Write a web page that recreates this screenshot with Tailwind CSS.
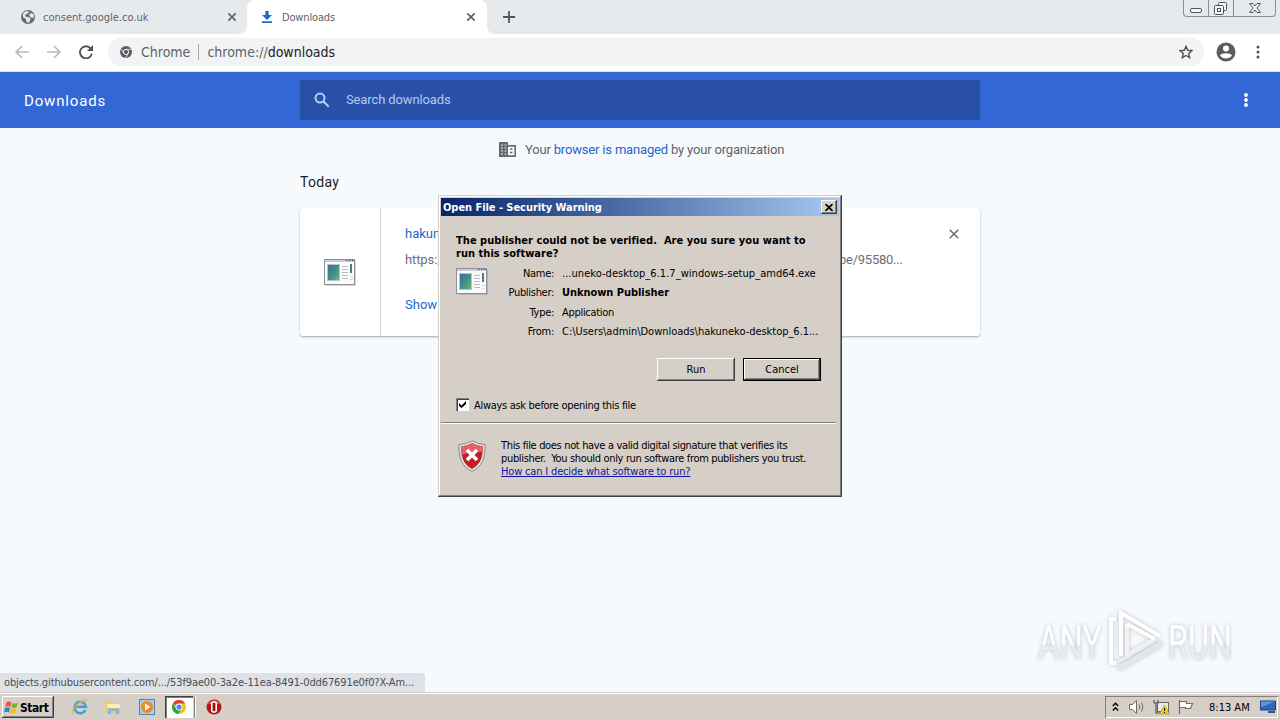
<!DOCTYPE html>
<html lang="en">
<head>
    <meta charset="UTF-8">
    <meta name="viewport" content="width=device-width, initial-scale=1.0">
    <title>Downloads</title>
    <script src="https://cdn.jsdelivr.net/npm/@tailwindcss/browser@4"></script>
</head>
<body class="bg-[#f7fafd] overflow-hidden">
    <!-- Shared icon -->
    <svg class="absolute w-0 h-0">
        <linearGradient id="app-photo" x1="0" y1="0" x2="1" y2="1">
            <stop offset="0" stop-color="#4569a8"/>
            <stop offset=".5" stop-color="#3f8d86"/>
            <stop offset="1" stop-color="#6db87a"/>
        </linearGradient>
        <symbol id="app-icon" viewBox="0 0 32 27">
            <rect x="1.5" y="1.5" width="30" height="25" fill="#77777f" opacity=".6"/>
            <rect x="0.5" y="0.5" width="30" height="25" fill="#fbfbfc" stroke="#8e9098"/>
            <path d="M1 1h29v2H1z" fill="#c9ccd6"/>
            <path d="M22 1.500h1.500M25 1.500h1.500M28 1.500h1.500" stroke="#4a4f60"/>
            <rect x="3.500" y="5.500" width="12" height="16" fill="url(#app-photo)" stroke="#b9c3cc"/>
            <path d="M18 7.500h6M18 10.500h6M18 13.500h6M18 16.500h6M18 19.500h6" stroke="#b9bbc4"/>
            <rect x="26" y="5" width="2" height="9" fill="#3f7f86"/>
            <path d="M26 17.500h3M26 20.500h3" stroke="#d5d7dc"/>
        </symbol>
    </svg>

    <div class="relative w-[1280px] h-[720px] overflow-hidden flex flex-col font-['Roboto',sans-serif]">
        <!-- Tab strip -->
        <div class="h-[34px] shrink-0 bg-[#e7eaed] flex relative font-['DejaVu_Sans_Condensed','DejaVu_Sans',sans-serif] text-[11px] text-[#5f6368]">
            <div class="w-[247px] h-[34px] pl-5 pr-[10px] flex items-center">
                <svg class="w-4 h-4" viewBox="0 0 16 16"><circle cx="8" cy="8" r="7" fill="#6a6d71"/><path d="M3 4.500l3-2.500 3 .5-1 2-2 .5-1 2 2 1 3 .5.5 2-2 3.500-2-1-.5-3-3-2zM11 4l2.500 1 .5 3-2 1-2-1.500-1-1.500z" fill="#e7eaed"/></svg>
                <span class="ml-[7px] pt-[2px]">consent.google.co.uk</span>
                <svg class="ml-auto w-[10px] h-[10px]" viewBox="0 0 10 10"><path d="M1.300 1.300l7.400 7.400M8.700 1.300L1.300 8.700" stroke="#5f6368" stroke-width="1.700"/></svg>
            </div>
            <div class="w-60 h-[34px] pl-[14px] pr-[11px] flex items-center bg-white rounded-t-lg">
                <svg class="w-3 h-3" viewBox="0 0 12 12"><path d="M4.300 0h3.400v4H11L6 9 1 4h3.300zM1 10.300h10V12H1z" fill="#1a6bd8"/></svg>
                <span class="ml-[9px] pt-[2px] tracking-[-0.150px]">Downloads</span>
                <svg class="ml-auto w-[10px] h-[10px]" viewBox="0 0 10 10"><path d="M1.300 1.300l7.400 7.400M8.700 1.300L1.300 8.700" stroke="#5f6368" stroke-width="1.700"/></svg>
            </div>
            <svg class="ml-4 mt-[11px] w-3 h-3" viewBox="0 0 12 12"><path d="M6 0v12M0 6h12" stroke="#505458" stroke-width="1.800"/></svg>
            <div class="absolute left-[239px] bottom-0 w-2 h-2 bg-white"><div class="w-2 h-2 bg-[#e7eaed] rounded-br-lg"></div></div>
            <div class="absolute left-[487px] bottom-0 w-2 h-2 bg-white"><div class="w-2 h-2 bg-[#e7eaed] rounded-bl-lg"></div></div>
            <!-- Window buttons -->
            <div class="absolute right-1 top-0 h-[17px] w-[93px] flex border border-t-0 border-[#8b8e92] rounded-b-[4px]">
                <div class="w-[25px] border-r border-[#8b8e92] flex justify-center">
                    <svg class="w-3 h-4" viewBox="0 0 12 16"><rect x=".5" y="8.500" width="11" height="4" rx="1.500" fill="#f4f5f6" stroke="#50555c"/></svg>
                </div>
                <div class="w-[25px] border-r border-[#8b8e92] flex justify-center">
                    <svg class="w-[14px] h-4" viewBox="0 0 14 16" fill="#f4f5f6" stroke="#50555c"><rect x="4.500" y="2.500" width="8" height="8" rx="1"/><rect x=".5" y="5.500" width="9" height="9" rx="1"/><rect x="3.500" y="8.500" width="3" height="3"/></svg>
                </div>
                <div class="flex-1 flex justify-center">
                    <svg class="w-3 h-4" viewBox="0 0 12 16"><path d="M.5 3.500h3.500l2 2.500 2-2.500h3.500L8 8l3.500 4.500H8L6 10l-2 2.500H.5L4 8z" fill="#f4f5f6" stroke="#50555c"/></svg>
                </div>
            </div>
        </div>

        <!-- Toolbar -->
        <div class="h-[38px] shrink-0 bg-white border-b border-[#dfe3e8] flex items-center pl-[15px] pr-[14px] pb-[1px]">
            <svg class="w-[14px] h-[14px]" viewBox="0 0 14 14" fill="none" stroke="#b8babd" stroke-width="1.700"><path d="M14 7H1.500M7 1L1.200 7 7 13"/></svg>
            <svg class="ml-[18px] w-[14px] h-[14px]" viewBox="0 0 14 14" fill="none" stroke="#b8babd" stroke-width="1.700"><path d="M0 7h12.500M7 1l5.800 6L7 13"/></svg>
            <svg class="ml-[18px] w-[14px] h-[14px]" viewBox="0 0 14 14"><path d="M11.700 3.600A6 6 0 1 0 12.800 8.800" fill="none" stroke="#505458" stroke-width="1.900"/><path d="M14 0v6H8z" fill="#505458"/></svg>
            <div class="ml-[15px] w-[1096px] h-7 rounded-full bg-[#f1f3f4] flex items-center pl-3 pr-[11px] font-['DejaVu_Sans_Condensed','DejaVu_Sans',sans-serif] text-[14px] text-[#5f6368]">
                <svg class="w-3 h-3" viewBox="0 0 12 12"><circle cx="6" cy="6" r="6" fill="#5a5e62"/><circle cx="6" cy="6" r="2.600" fill="none" stroke="#f1f3f4" stroke-width="1"/><path d="M6 3.400h5.200M3.700 7.300L1.200 3M8.200 7.300L5.700 11.700" stroke="#f1f3f4" stroke-width=".8"/></svg>
                <span class="ml-[9px]">Chrome</span>
                <span class="ml-[8px] w-px h-4 bg-[#a6a9ad]"></span>
                <span class="ml-[8px]">chrome://<span class="text-[#202124]">downloads</span></span>
                <svg class="ml-auto w-[14px] h-[14px]" viewBox="0 0 14 14"><path d="M7 1.300l1.700 4 4.300.4-3.300 2.800 1 4.200L7 10.500l-3.700 2.200 1-4.200L1 5.700l4.300-.4z" fill="none" stroke="#505458" stroke-width="1.400"/></svg>
            </div>
            <svg class="ml-3 w-5 h-5" viewBox="0 0 20 20"><circle cx="10" cy="10" r="9.500" fill="#5a5d61"/><circle cx="10" cy="6.500" r="3" fill="#fff"/><path d="M4 13.500c1.500-3 10.500-3 12 0-2.500 4-9.500 4-12 0z" fill="#fff"/></svg>
            <svg class="ml-5 w-1 h-[14px]" viewBox="0 0 4 14" fill="#505458"><circle cx="2" cy="2" r="1.500"/><circle cx="2" cy="7" r="1.500"/><circle cx="2" cy="12" r="1.500"/></svg>
        </div>

        <!-- Downloads header -->
        <div class="h-14 shrink-0 bg-[#3367d6] text-white flex items-center pl-6 pr-[31px]">
            <h1 class="w-[276px] pt-[2px] text-[15px] tracking-[0.850px]">Downloads</h1>
            <div class="w-[680px] h-10 bg-[#2850a7] flex items-center pl-[14px]">
                <svg class="w-4 h-4" viewBox="0 0 16 16" fill="none" stroke="#b9cbf2" stroke-width="2"><circle cx="6" cy="6" r="4.500"/><path d="M9.300 9.300l5.500 5.500"/></svg>
                <span class="ml-4 text-[13px] text-[#b9cbf2] tracking-[-0.120px]">Search downloads</span>
            </div>
            <svg class="ml-auto w-[6px] h-4" viewBox="0 0 6 16" fill="#fff"><circle cx="3" cy="3" r="1.900"/><circle cx="3" cy="8" r="1.900"/><circle cx="3" cy="13" r="1.900"/></svg>
        </div>

        <!-- Downloads list -->
        <div class="flex-1 w-[680px] ml-[300px] text-[13px]">
            <div class="h-[43px] flex items-center pl-[199px] text-[#5f6368]">
                <svg class="w-[17px] h-[15px]" viewBox="0 0 17 15"><path d="M0 0h9v3h8v12H0z" fill="#65686c"/><path d="M2 3h2M5.500 3h2M2 6h2M5.500 6h2M2 9h2M5.500 9h2M2 12h2M5.500 12h2" stroke="#f7fafd" stroke-width=".9"/><path d="M9 4.700h6.400v8.600H9z" fill="#f7fafd"/><path d="M11 7h2.500M11 10.500h2.500" stroke="#65686c" stroke-width="1.500"/></svg>
                <span class="ml-[9px] whitespace-nowrap tracking-[-0.175px]">Your <span class="text-[#2566c8]">browser is managed</span> by your organization</span>
            </div>
            <div class="h-[37px] pt-[1px] text-[14px] leading-[20px] text-[#202124] tracking-[0.300px]">Today</div>
            <div class="h-32 bg-white rounded-[3px] shadow-[0_1px_2px_rgba(60,64,67,0.45)] flex">
                <div class="w-[81px] border-r border-[#d6d8db] flex items-center justify-center">
                    <svg class="w-8 h-[27px]"><use href="#app-icon"/></svg>
                </div>
                <div class="flex-1 pl-6 pt-[17px] pr-[21px]">
                    <div class="flex items-center justify-between h-[18px]">
                        <span class="w-10 overflow-hidden text-[#2566c8]">hakun</span>
                        <svg class="w-[10px] h-[10px]" viewBox="0 0 10 10"><path d="M.7.7l8.600 8.600M9.300.7L.7 9.300" stroke="#5f6368" stroke-width="1.300"/></svg>
                    </div>
                    <div class="mt-2 h-[18px] leading-[18px] flex text-[#6b6e73]">
                        <span class="w-[434px] tracking-[-0.100px]">https:/</span>
                        <span class="tracking-[-0.250px]">be/95580...</span>
                    </div>
                    <div class="mt-[27px] h-[18px] leading-[18px] text-[#2566c8]">Show</div>
                </div>
            </div>
        </div>

        <!-- Link status -->
        <div class="w-[425px] h-[19px] shrink-0 bg-[#dee1e6] rounded-tr-[4px] pl-1 pt-[1px] flex items-center font-['DejaVu_Sans_Condensed','DejaVu_Sans',sans-serif] text-[11px] text-[#4a4d52] tracking-[-0.120px] whitespace-nowrap">objects.githubusercontent.com/.../53f9ae00-3a2e-11ea-8491-0dd67691e0f0?X-Am...</div>

        <!-- Taskbar -->
        <div class="h-7 shrink-0 bg-[#d5cfc7] border-t border-[#d5cfc7] shadow-[inset_0_1px_#fff] flex items-center pt-[1px] pl-[2px] pr-[2px] font-['DejaVu_Sans_Condensed','DejaVu_Sans',sans-serif] text-[11px] text-black">
            <div class="w-[52px] h-[22px] flex items-center pl-[2px] shadow-[inset_-1px_-1px_#404040,inset_1px_1px_#fff,inset_-2px_-2px_#808080]">
                <svg class="w-[15px] h-[15px]" viewBox="0 0 15 15"><path d="M2.500 2.500Q5 .5 7.500 2.500L6.300 7Q4 5.200 1.300 7z" fill="#e8582c"/><path d="M8.500 2.700Q11 4.500 14 2.500L12.700 7Q10 9 7.300 7z" fill="#77b52b"/><path d="M1 8Q3.500 6.300 6 8L4.800 12.500Q2.500 10.800 0 12.500z" fill="#2d7fd0"/><path d="M7 8.200Q9.500 10 12.500 8L11.200 12.500Q8.500 14.300 5.800 12.500z" fill="#f6b921"/></svg>
                <span class="ml-[1px] pt-[2px] font-bold text-[12px] tracking-[-0.450px]">Start</span>
            </div>
            <svg class="ml-[17px] w-[18px] h-[18px]" viewBox="0 0 18 18"><path d="M14.500 12A5.800 5.800 0 1 1 15 8.800H4.500" fill="none" stroke="#3ba0dc" stroke-width="2.500"/><path d="M1.500 16C-.5 12.500 8 2 16.500 2" fill="none" stroke="#e8b63c" stroke-width="1.300"/></svg>
            <svg class="ml-4 w-[17px] h-4" viewBox="0 0 17 16"><path d="M1 2h6l1 2h7v10H1z" fill="#efcb62"/><path d="M2 5h13v4H2z" fill="#fbeeb2"/><path d="M3 15V9.500h11V15h-3v-3H6v3z" fill="#7fb8df"/></svg>
            <svg class="ml-[17px] w-4 h-4" viewBox="0 0 16 16"><rect x=".5" y=".5" width="15" height="15" fill="#a9cbe8" stroke="#4a86bd"/><circle cx="8" cy="8" r="6" fill="#ef8a1d"/><path d="M6 4.500l5.500 3.500L6 11.500z" fill="#fff"/></svg>
            <div class="ml-[10px] w-[28px] h-[22px] bg-white flex items-center justify-center shadow-[inset_1px_1px_#404040,inset_2px_2px_#808080,inset_-1px_-1px_#fff]">
                <svg class="w-[14px] h-[14px]" viewBox="0 0 14 14"><circle cx="7" cy="7" r="7" fill="#fbc116"/><path d="M7 7L.9 3.500A7 7 0 0 1 13.100 3.500H7z" fill="#e23c2e"/><path d="M.9 3.500A7 7 0 0 0 6.500 14L9.500 8.800 4.200 8.600z" fill="#2ba24c"/><circle cx="7" cy="7" r="3.400" fill="#fff"/><circle cx="7" cy="7" r="2.600" fill="#4285f4"/></svg>
            </div>
            <div class="ml-[1px] w-[2px] h-[22px] border-l border-[#808080] bg-white"></div>
            <svg class="ml-[10px] w-4 h-4" viewBox="0 0 16 16"><circle cx="8" cy="8" r="7.500" fill="#b5151b"/><path d="M2 5a7 7 0 0 1 12 0z" fill="#df5d51"/><rect x="5.800" y="3" width="4.400" height="10" rx="1.500" fill="#a01014" stroke="#fff" stroke-width="1.600"/></svg>
            <!-- Tray -->
            <div class="ml-auto w-[173px] h-[22px] flex items-center pl-[7px] shadow-[inset_1px_1px_#808080,inset_-1px_-1px_#fff]">
                <svg class="w-[7px] h-[10px]" viewBox="0 0 7 10" fill="none" stroke="#000" stroke-width="1.400"><path d="M.8 4L3.500 1.300 6.200 4M.8 8.500l2.700-2.700 2.700 2.700"/></svg>
                <svg class="ml-[10px] w-[17px] h-[14px]" viewBox="0 0 17 14" stroke="#6d6d6d"><path d="M.5 4.500h3l4-4v13l-4-4h-3z" fill="#fff"/><path d="M10 4.500q2 2.500 0 5M12.500 2.500q3 4.500 0 9" fill="none"/></svg>
                <svg class="ml-[7px] w-[17px] h-4" viewBox="0 0 17 16"><rect x="4.500" y="3.500" width="11" height="9" fill="#e9e9e9" stroke="#666"/><path d="M1 1v3h4V1M3 4v10h5" fill="none" stroke="#555" stroke-width="1.200"/><path d="M11.500 6l5 9h-10z" fill="#f5cf1b" stroke="#b08b00" stroke-width=".6"/><path d="M11.500 9v3M11.500 13v1" stroke="#000"/></svg>
                <svg class="ml-2 w-4 h-4" viewBox="0 0 16 16"><path d="M1.500 1v14M1.500 2.500h7v2h6l-2 5h-5v-1h-6z" fill="#fff" stroke="#6d6d6d" stroke-width="1.200"/></svg>
                <span class="ml-[15px] w-[42px] pt-[2px] whitespace-nowrap">8:13 AM</span>
                <svg class="ml-[9px] w-4 h-[14px]" viewBox="0 0 16 14"><path d="M.5 1h15v9H.5z" fill="#2b67c2" stroke="#1f3f7a"/><path d="M1 1.500h14L1 7z" fill="#5d97df"/><path d="M8 12h7" stroke="#31548c" stroke-width="2"/></svg>
            </div>
        </div>

        <!-- Watermark -->
        <svg class="absolute left-[1030px] top-[602px] w-[230px] h-[76px] drop-shadow-[0_0_2px_rgba(60,70,80,0.3)]" viewBox="0 0 230 76">
            <defs>
                <linearGradient id="mark" x1="0" y1="0" x2="0" y2="1"><stop offset=".52" stop-color="#fff"/><stop offset=".56" stop-color="#e9ebed"/></linearGradient>
            </defs>
            <g fill="url(#mark)" font-family="Roboto" font-size="49">
                <text x="8" y="57" textLength="64" lengthAdjust="spacingAndGlyphs">ANY</text>
                <text x="138" y="57" textLength="64" lengthAdjust="spacingAndGlyphs">RUN</text>
            </g>
            <g fill="none" stroke-width="4">
                <path d="M86 17h-5v44h5" stroke="#fff"/>
                <path d="M91 54V11l39 23" stroke="#fff"/>
                <path d="M97 22v31l28-16" stroke="#f1f3f4"/>
                <path d="M97 22l28 15" stroke="#fff"/>
                <path d="M88 67l44-26" stroke="#e4e6e8" stroke-width="5"/>
                <path d="M88 60l36-21" stroke="#eceeef" stroke-width="3"/>
            </g>
        </svg>

        <!-- Security warning -->
        <div class="absolute left-[438px] top-[195px] w-[404px] h-[302px] bg-[#d5cfc7] p-[3px] flex flex-col text-black text-[11px] leading-[13px] font-['DejaVu_Sans_Condensed','DejaVu_Sans',sans-serif] whitespace-nowrap shadow-[inset_-1px_-1px_#404040,inset_1px_1px_#d5cfc7,inset_-2px_-2px_#808080,inset_2px_2px_#fff]">
            <div class="h-[18px] shrink-0 bg-linear-to-r from-[#0a246a] to-[#a6caf0] flex items-center justify-between pl-[2px] pr-[2px] text-white font-bold">
                <span class="tracking-[-0.050px]">Open File - Security Warning</span>
                <div class="w-4 h-[14px] bg-[#d5cfc7] flex items-center justify-center shadow-[inset_-1px_-1px_#404040,inset_1px_1px_#fff,inset_-2px_-2px_#808080]">
                    <svg class="w-2 h-[7px]" viewBox="0 0 8 7"><path d="M.5 0L7.500 7M7.500 0L.5 7" stroke="#000" stroke-width="1.700"/></svg>
                </div>
            </div>
            <div class="pt-[18px] pl-[15px] font-bold tracking-[0.040px]">
                <p>The publisher could not be verified.&nbsp; Are you sure you want to</p>
                <p>run this software?</p>
            </div>
            <div class="mt-[3px] pl-[15px] flex">
                <svg class="mt-[5px] w-8 h-[27px]"><use href="#app-icon"/></svg>
                <div class="ml-[9px] grid grid-cols-[57px_auto] grid-rows-[20px_19px_20px_19px] gap-x-2 items-center tracking-[-0.300px]">
                    <span class="text-right">Name:</span><span class="tracking-[0.040px]">...uneko-desktop_6.1.7_windows-setup_amd64.exe</span>
                    <span class="text-right">Publisher:</span><span class="font-bold tracking-[-0.050px]">Unknown Publisher</span>
                    <span class="text-right">Type:</span><span>Application</span>
                    <span class="text-right">From:</span><span class="tracking-[-0.030px]">C:\Users\admin\Downloads\hakuneko-desktop_6.1...</span>
                </div>
            </div>
            <div class="mt-[17px] pr-[18px] flex justify-end gap-2">
                <button class="w-[78px] h-[23px] shadow-[inset_-1px_-1px_#404040,inset_1px_1px_#fff,inset_-2px_-2px_#808080]">Run</button>
                <button class="w-[78px] h-[23px] border border-black shadow-[inset_-1px_-1px_#404040,inset_1px_1px_#fff,inset_-2px_-2px_#808080]">Cancel</button>
            </div>
            <div class="mt-[17px] h-[14px] pl-[15px] flex items-start">
                <div class="w-[13px] h-[13px] bg-white flex items-center justify-center shadow-[inset_1px_1px_#808080,inset_2px_2px_#404040,inset_-1px_-1px_#fff]">
                    <svg class="w-[7px] h-[7px]" viewBox="0 0 7 7"><path d="M0 2l2.500 2.500L7 0v3L2.500 7 0 5z"/></svg>
                </div>
                <span class="ml-[5px] pt-[1px] tracking-[-0.300px]">Always ask before opening this file</span>
            </div>
            <div class="mt-[10px] w-[395px] h-[2px] border-t border-[#808080] bg-white"></div>
            <div class="mt-[15px] pl-[17px] flex">
                <svg class="mt-[1px] w-7 h-8" viewBox="0 0 28 32">
                    <path d="M14 .7Q19 4 27 4.500C27.500 18 24 27 14 31.300 4 27 .5 18 1 4.500 9 4 14 .7 14 .7z" fill="#e4e4e4" stroke="#8b8582"/>
                    <path d="M14 3Q19 6 25 6.500C25 17.500 22 25 14 29 6 25 3 17.500 3 6.500 9 6 14 3 14 3z" fill="#bd2027"/>
                    <path d="M14 3Q19 6 25 6.500L24.500 12Q14 10 3.500 15L3 6.500Q9 6 14 3z" fill="#df6568"/>
                    <path d="M9 10l10 10M19 10L9 20" stroke="#fff" stroke-width="3.600"/>
                </svg>
                <div class="ml-[15px] tracking-[-0.340px]">
                    <p>This file does not have a valid digital signature that verifies its</p>
                    <p>publisher.&nbsp; You should only run software from publishers you trust.</p>
                    <p class="text-[#1414a0] underline tracking-[-0.170px]">How can I decide what software to run?</p>
                </div>
            </div>
        </div>
    </div>
</body>
</html>
